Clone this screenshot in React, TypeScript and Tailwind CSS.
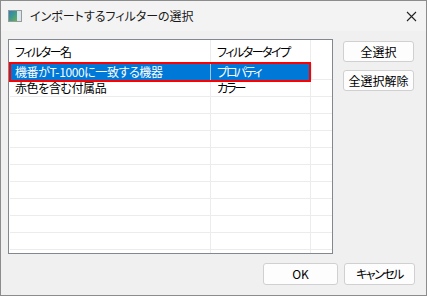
import React from "react";

const font = { fontFamily: '"Noto Sans CJK JP", "Noto Sans", sans-serif' };

type Row = { name: string; type: string };

const rows: Row[] = [
  { name: "機番がT-1000に一致する機器", type: "プロパティ" },
  { name: "赤色を含む付属品", type: "カラー" },
];

function WinButton({ label, className = "" }: { label: string; className?: string }) {
  return (
    <button
      className={`h-[21px] rounded-[3px] border border-[#d0d0d0] bg-[#fdfdfd] text-[12px] leading-none text-black whitespace-nowrap ${className}`}
    >
      {label}
    </button>
  );
}

export default function App() {
  const empty = Array.from({ length: 10 });

  return (
    <div
      className="w-[427px] h-[296px] bg-[#f0f0f0] border border-[#8c8c8c] flex flex-col overflow-hidden [font-feature-settings:'palt']"
      style={font}
    >
      {/* タイトルバー */}
      <div className="h-[30px] bg-[#f3f3f3] flex items-center pl-[7px] pr-[9px] shrink-0">
        <div className="w-[14px] h-[12px] border border-[#9a9a9a] bg-[#e8e8e8] flex mr-[8px]">
          <div className="w-[8px] h-full bg-gradient-to-br from-[#2f7fc0] via-[#3f9a8a] to-[#6ab04c]" />
          <div className="flex-1 bg-[#d8e6f0]" />
        </div>
        <span className="text-[12px] text-[#1a1a1a] whitespace-nowrap">インポートするフィルターの選択</span>
        <svg className="ml-auto" width="11" height="11" viewBox="0 0 11 11">
          <path d="M1 1 L10 10 M10 1 L1 10" stroke="#222" strokeWidth="1.1" />
        </svg>
      </div>

      {/* 本体 */}
      <div className="flex pl-[7px] pt-[8px]">
        <div className="w-[325px] h-[215px] bg-white border border-[#828790] flex flex-col text-[12px] text-black overflow-hidden whitespace-nowrap">
          <div className="flex h-[23px] shrink-0">
            <div className="w-[201px] pl-[6px] flex items-center tracking-[-1.5px]">フィルター名</div>
            <div className="w-[100px] pl-[6px] flex items-center border-l border-[#ececec] tracking-[-1.5px]">フィルタータイプ</div>
            <div className="flex-1 border-l border-[#ececec]" />
          </div>
          {rows.map((r, i) =>
            i === 0 ? (
              <div key={i} className="flex h-[17px] shrink-0 relative">
                <div className="flex w-[301px] ml-[1px] bg-[#0078d7] text-white">
                  <div className="w-[200px] pl-[5px] flex items-center tracking-[-0.4px]">{r.name}</div>
                  <div className="w-[100px] pl-[6px] flex items-center border-l border-[#9cc8ee] tracking-[-2px]">{r.type}</div>
                </div>
                <div className="flex-1 border-l border-[#ececec] border-b" />
                <div className="absolute left-[0px] top-[-1px] w-[302px] h-[20px] border-2 border-[#ff0000]" />
              </div>
            ) : (
              <div key={i} className="flex h-[17px] shrink-0 border-b border-[#ececec] ml-[1px]">
                <div className="w-[200px] pl-[5px] flex items-center tracking-[-0.4px]">{r.name}</div>
                <div className="w-[100px] pl-[6px] flex items-center border-l border-[#ececec] tracking-[-2px]">{r.type}</div>
                <div className="flex-1 border-l border-[#ececec]" />
              </div>
            )
          )}
          {empty.map((_, i) => (
            <div key={i} className="flex h-[17px] shrink-0 border-b border-[#ececec] ml-[1px]">
              <div className="w-[200px]" />
              <div className="w-[100px] border-l border-[#ececec]" />
              <div className="flex-1 border-l border-[#ececec]" />
            </div>
          ))}
          <div className="flex flex-1 ml-[1px]">
            <div className="w-[200px]" />
            <div className="w-[100px] border-l border-[#ececec]" />
            <div className="flex-1 border-l border-[#ececec]" />
          </div>
        </div>

        <div className="flex flex-col ml-[10px] pt-[2px] gap-[8px]">
          <WinButton label="全選択" className="w-[71px]" />
          <WinButton label="全選択解除" className="w-[71px]" />
        </div>
      </div>

      {/* フッター */}
      <div className="flex justify-end gap-[6px] pr-[11px] pt-[9px]">
        <WinButton label="OK" className="w-[75px] h-[22px]" />
        <WinButton label="キャンセル" className="w-[71px] h-[22px] tracking-[-1.5px]" />
      </div>
    </div>
  );
}
